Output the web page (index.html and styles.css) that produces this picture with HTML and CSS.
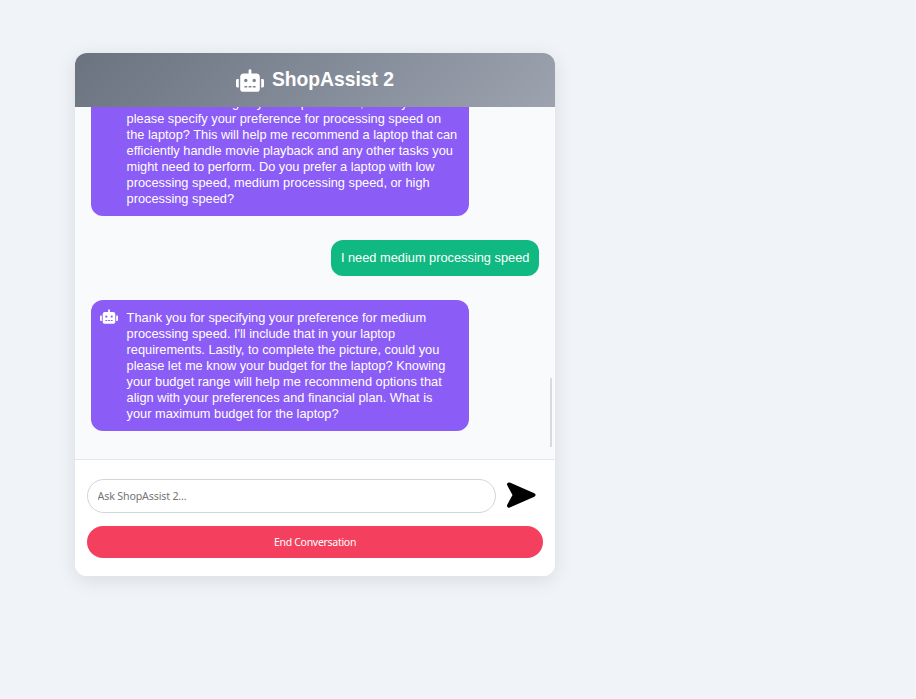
FILE: index.html
```html
<!DOCTYPE html>
<html lang="en">
<head>
<meta charset="utf-8">
<title>ShopAssist 2</title>
<link rel="stylesheet" href="styles.css">
</head>
<body>
<svg class="defs" aria-hidden="true">
  <symbol id="robot" viewBox="0 0 640 512"><path fill="currentColor" fill-rule="evenodd" d="M32 224h32v192H32a32 32 0 0 1-32-32V256a32 32 0 0 1 32-32zM544 176v272a64 64 0 0 1-64 64H160a64 64 0 0 1-64-64V176a80 80 0 0 1 80-80h112V32a32 32 0 0 1 64 0v64h112a80 80 0 0 1 80 80zM264 256a40 40 0 1 0-80 0 40 40 0 0 0 80 0zM256 384h-64v32h64zM352 384h-64v32h64zM456 256a40 40 0 1 0-80 0 40 40 0 0 0 80 0zM448 384h-64v32h64zM640 256v128a32 32 0 0 1-32 32h-32V224h32a32 32 0 0 1 32 32z"/></symbol>
</svg>
<main class="chat">
  <header class="header">
    <svg class="header-icon"><use href="#robot"/></svg>
    <h1>ShopAssist 2</h1>
  </header>
  <section class="messages">
    <div class="bubble bot continued">
      <p>clear understanding of your requirements, could you<br>please specify your preference for processing speed on<br>the laptop? This will help me recommend a laptop that can<br>efficiently handle movie playback and any other tasks you<br>might need to perform. Do you prefer a laptop with low<br>processing speed, medium processing speed, or high<br>processing speed?</p>
    </div>
    <div class="bubble user"><p>I need medium processing speed</p></div>
    <div class="bubble bot">
      <svg class="bot-icon"><use href="#robot"/></svg>
      <p>Thank you for specifying your preference for medium<br>processing speed. I'll include that in your laptop<br>requirements. Lastly, to complete the picture, could you<br>please let me know your budget for the laptop? Knowing<br>your budget range will help me recommend options that<br>align with your preferences and financial plan. What is<br>your maximum budget for the laptop?</p>
    </div>
    <div class="scrollbar"></div>
  </section>
  <form class="composer">
    <div class="row">
      <input class="field" type="text" placeholder="Ask ShopAssist 2...">
      <button class="send" type="button" aria-label="Send">
        <svg viewBox="0 0 32 28"><path d="M4 3.4 28.5 14 4 24.6 9.8 14Z" stroke="#000" stroke-width="4" stroke-linejoin="round"/></svg>
      </button>
    </div>
    <button class="end" type="button">End Conversation</button>
  </form>
</main>
</body>
</html>
```
FILE: styles.css
```css
* { box-sizing: border-box; }
body {
  margin: 0;
  padding: 53px 75px;
  background: #f0f4f8;
  font-family: "Liberation Sans", Arial, sans-serif;
}
.defs { display: none; }
.chat {
  width: 480px;
  height: 523px;
  display: flex;
  flex-direction: column;
  overflow: hidden;
  border-radius: 12px;
  background: #fff;
  box-shadow: 0 4px 20px rgba(0, 0, 0, .1);
}
.header {
  flex: 0 0 54px;
  display: flex;
  align-items: center;
  justify-content: center;
  gap: 8px;
  background: linear-gradient(135deg, #6b7280, #9ca3af);
  color: #fff;
}
.header-icon { width: 28px; height: 23px; margin-top: 1px; }
.header h1 { margin: 0; font-size: 19.3px; line-height: 22px; }
.messages {
  position: relative;
  flex: 1;
  min-height: 0;
  display: flex;
  flex-direction: column;
  justify-content: flex-end;
  gap: 24px;
  padding: 0 16px 28px;
  overflow: hidden;
  background: #f9fafc;
}
.bubble {
  flex-shrink: 0;
  border-radius: 12px;
  padding: 10px 9.6px;
  color: #fff;
  font-size: 12.8px;
  line-height: 16px;
}
.bubble p { margin: 0; white-space: nowrap; }
.bot {
  width: 378px;
  display: flex;
  align-items: flex-start;
  gap: 8.6px;
  padding: 10px 9px 9px;
  background: #8b5cf6;
}
.continued { padding-left: 35.6px; }
.bot-icon { width: 18px; height: 15px; flex: none; margin-top: -1px; }
.user { align-self: flex-end; background: #10b981; }
.scrollbar {
  position: absolute;
  right: 3px;
  top: 271px;
  width: 2px;
  height: 69px;
  background: #d9dadd;
}
.composer {
  flex: 0 0 117px;
  border-top: 1px solid #e5e7eb;
  padding: 19px 12px 18px;
  background: #fff;
}
.row { display: flex; align-items: center; height: 34px; margin-bottom: 13px; }
.field {
  width: 409px;
  height: 34px;
  padding: 0 10px 0 9.6px;
  border: 1px solid #d1d5db;
  border-radius: 17px;
  font: 10.7px "Noto Sans", sans-serif;
  letter-spacing: -.18px;
}
.field::placeholder { color: #757575; }
.send {
  width: 32px;
  height: 28px;
  margin: -2px 0 0 9px;
  padding: 0;
  border: 0;
  background: none;
}
.send svg { display: block; width: 32px; height: 28px; }
.end {
  width: 100%;
  height: 32px;
  border: 0;
  border-radius: 16px;
  padding: 0;
  background: #f43f5e;
  color: #fff;
  font: 10.5px "Noto Sans", sans-serif;
  letter-spacing: -.29px;
}
```
